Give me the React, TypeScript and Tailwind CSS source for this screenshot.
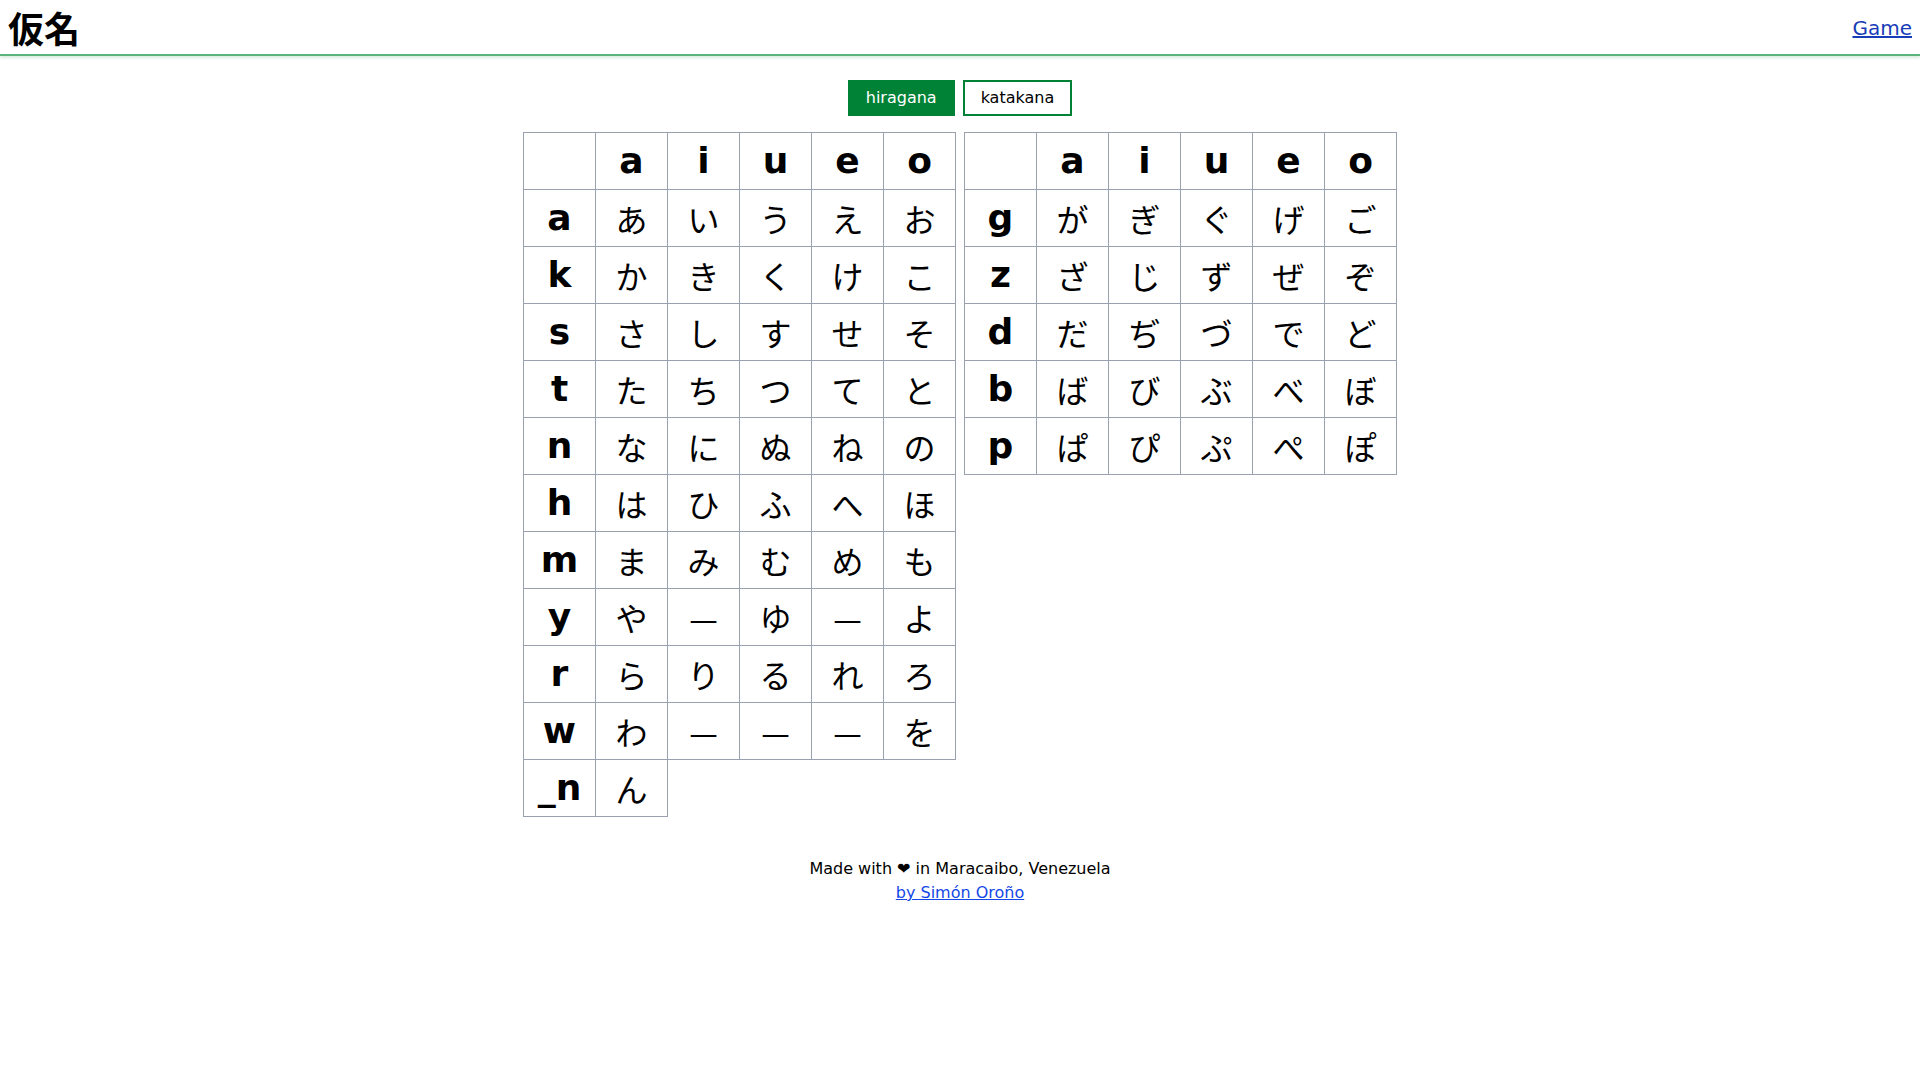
import { useState } from "react";

type Row = { label: string; kana: (string | null)[] };

const vowels = ["a", "i", "u", "e", "o"];

const basic: Row[] = [
  { label: "a", kana: ["あ", "い", "う", "え", "お"] },
  { label: "k", kana: ["か", "き", "く", "け", "こ"] },
  { label: "s", kana: ["さ", "し", "す", "せ", "そ"] },
  { label: "t", kana: ["た", "ち", "つ", "て", "と"] },
  { label: "n", kana: ["な", "に", "ぬ", "ね", "の"] },
  { label: "h", kana: ["は", "ひ", "ふ", "へ", "ほ"] },
  { label: "m", kana: ["ま", "み", "む", "め", "も"] },
  { label: "y", kana: ["や", "—", "ゆ", "—", "よ"] },
  { label: "r", kana: ["ら", "り", "る", "れ", "ろ"] },
  { label: "w", kana: ["わ", "—", "—", "—", "を"] },
  { label: "_n", kana: ["ん", null, null, null, null] },
];

const voiced: Row[] = [
  { label: "g", kana: ["が", "ぎ", "ぐ", "げ", "ご"] },
  { label: "z", kana: ["ざ", "じ", "ず", "ぜ", "ぞ"] },
  { label: "d", kana: ["だ", "ぢ", "づ", "で", "ど"] },
  { label: "b", kana: ["ば", "び", "ぶ", "べ", "ぼ"] },
  { label: "p", kana: ["ぱ", "ぴ", "ぷ", "ぺ", "ぽ"] },
];

const KanaTable = ({ rows }: { rows: Row[] }) => {
  return (
    <table className="border-collapse table-fixed">
      <thead>
        <tr>
          <th className="border border-gray-400 w-[72px] h-[57px] p-0"></th>
          {vowels.map((v) => (
            <th key={v} className="border border-gray-400 w-[72px] h-[57px] p-0 text-4xl font-bold text-center">
              {v}
            </th>
          ))}
        </tr>
      </thead>
      <tbody>
        {rows.map((row) => (
          <tr key={row.label}>
            <th className="border border-gray-400 w-[72px] h-[57px] p-0 text-4xl font-bold text-center">
              {row.label}
            </th>
            {row.kana.map((k, i) =>
              k === null ? null : (
                <td
                  key={i}
                  className="border border-gray-400 w-[72px] h-[57px] p-0 text-center text-[32px] font-['Noto_Sans_CJK_JP',sans-serif]"
                >
                  {k}
                </td>
              )
            )}
          </tr>
        ))}
      </tbody>
    </table>
  );
};

const App = () => {
  const [mode, setMode] = useState<"hiragana" | "katakana">("hiragana");

  return (
    <div className="min-h-screen bg-white text-black font-['DejaVu_Sans','Noto_Sans_CJK_JP',sans-serif]">
      <header className="h-[56px] flex items-center justify-between px-2 border-b-2 border-[#5bb37c] shadow-[0_2px_3px_rgba(91,179,124,0.25)]">
        <h1 className="text-4xl font-bold mt-[7px]">仮名</h1>
        <a href="#" className="text-xl text-blue-800 underline mt-[1px]">
          Game
        </a>
      </header>

      <div className="flex justify-center gap-2 mt-6">
        <button
          onClick={() => setMode("hiragana")}
          className={`border-2 border-[#008236] px-4 py-1 text-base ${mode === "hiragana" ? "bg-[#008236] text-white" : "bg-white text-black"}`}
        >
          hiragana
        </button>
        <button
          onClick={() => setMode("katakana")}
          className={`border-2 border-[#008236] px-4 py-1 text-base ${mode === "katakana" ? "bg-[#008236] text-white" : "bg-white text-black"}`}
        >
          katakana
        </button>
      </div>

      <div className="flex justify-center items-start gap-2 mt-4">
        <KanaTable rows={basic} />
        <KanaTable rows={voiced} />
      </div>

      <footer className="mt-10 text-center text-base leading-6">
        <p>Made with ❤ in Maracaibo, Venezuela</p>
        <a href="#" className="text-blue-700 underline">
          by Simón Oroño
        </a>
      </footer>
    </div>
  );
};

export default App;
